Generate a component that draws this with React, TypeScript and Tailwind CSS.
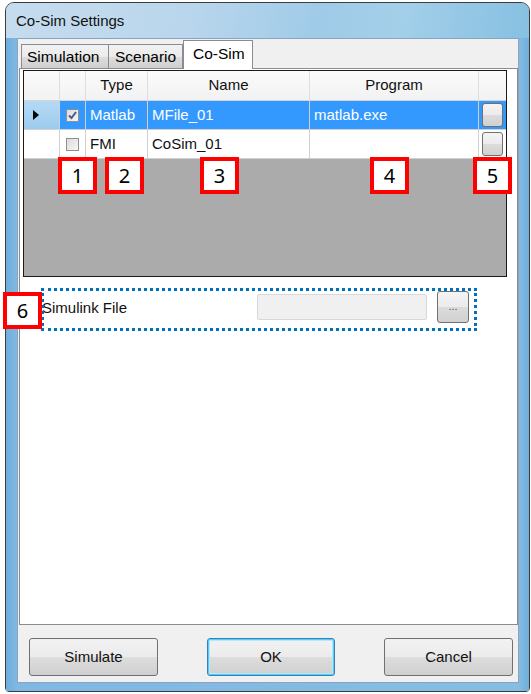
import React from "react";

const font = { fontFamily: '"Liberation Sans", Arial, sans-serif' };

function CheckBox({ checked }: { checked: boolean }) {
  return (
    <div className="w-[13px] h-[13px] border border-[#8e8f8f] bg-[linear-gradient(135deg,#dcdcdc,#f6f6f6)] flex items-center justify-center">
      {checked && (
        <svg width="11" height="11" viewBox="0 0 11 11">
          <path d="M2 5.5 L4.5 8 L9 2" fill="none" stroke="#4a5a8c" strokeWidth="2" />
        </svg>
      )}
    </div>
  );
}

function CellButton() {
  return (
    <div className="w-[21px] h-[24px] rounded-[3px] border border-[#707070] bg-[linear-gradient(#f4f4f4,#ebebeb_50%,#dcdcdc_51%,#d0d0d0)]" />
  );
}

function Label({ n, x, y }: { n: string; x: number; y: number }) {
  return (
    <div
      className="absolute w-[39px] h-[37px] border-[4px] border-[#ff0000] bg-white flex items-center justify-center text-[20px] text-black"
      style={{ left: x, top: y, fontFamily: '"Noto Sans", sans-serif' }}
    >
      {n}
    </div>
  );
}

const cols = [36, 26, 62, 162, 169, 27];

export default function App() {
  return (
    <div className="relative w-[531px] h-[694px] bg-white pt-[2px] pl-[5px] text-[15px] text-black" style={font}>
      <div className="w-[525px] h-[690px] rounded-t-[9px] rounded-b-[4px] border border-[#3c3c3c] bg-[linear-gradient(#a9cfea,#86bde3_30%,#6faedc)] flex flex-col">
        <div className="h-[35px] rounded-t-[8px] bg-[linear-gradient(100deg,#c6dcee,#b9d6ec_35%,#9fcbe8_60%,#a3cfe9_75%,#86c0e2)] flex items-center pl-[10px] pt-[2px]">
          <span className="text-[15px] text-[#111]">Co-Sim Settings</span>
        </div>
        <div className="flex-1 pl-[11px] pr-[10px] pb-[8px] bg-[linear-gradient(90deg,#6faedc,#7fb8e2_2%,#86bde3_98%,#6faedc)]">
          <div className="h-full border border-[#8aa4bf] bg-[#f0f0f0] flex flex-col">
            <div className="ml-[1px] mt-[1px] w-[499px]">
              <div className="h-[28px] pl-[2px] flex items-end">
                <div className="h-[24px] w-[88px] border border-[#898c95] border-b-0 bg-[linear-gradient(#f2f2f2,#ebebeb_50%,#dddddd_51%,#cfcfcf)] flex items-center pl-[5px] text-[15.5px]">
                  Simulation
                </div>
                <div className="h-[24px] w-[74px] border border-l-0 border-[#898c95] border-b-0 bg-[linear-gradient(#f2f2f2,#ebebeb_50%,#dddddd_51%,#cfcfcf)] flex items-center pl-[6px] text-[15.5px]">
                  Scenario
                </div>
                <div className="relative z-10 -mb-[1px] h-[29px] w-[70px] border border-[#898c95] border-b-0 bg-white flex items-center pl-[9px] pb-[2px] text-[15.5px]">
                  Co-Sim
                </div>
              </div>
              <div className="h-[557px] border border-[#898c95] bg-white pt-[1px] px-[3px]">
                <div className="w-[484px] h-[207px] border border-[#1a1a1a] flex flex-col bg-[#ababab]">
                  <div className="h-[30px] flex bg-[linear-gradient(#fbfbfb,#f2f2f2)] border-b border-[#d5d5d5]">
                    {["", "", "Type", "Name", "Program", ""].map((t, i) => (
                      <div
                        key={i}
                        className="h-full flex items-center justify-center border-r border-[#dedede] last:border-r-0 text-[#111]"
                        style={{ width: cols[i] }}
                      >
                        {t}
                      </div>
                    ))}
                  </div>
                  <div className="h-[29px] flex border-b border-[#d0d0d0] bg-white">
                    <div className="h-full border-r border-[#d0d0d0] bg-[linear-gradient(#b5d9f5,#9ccbef)] flex items-center pl-[9px]" style={{ width: cols[0] }}>
                      <svg width="6" height="10" viewBox="0 0 6 10">
                        <path d="M0 0 L6 5 L0 10 Z" fill="#000" />
                      </svg>
                    </div>
                    <div className="h-full border-r border-[#d0d0d0] bg-[#3399ff] flex items-center justify-center" style={{ width: cols[1] }}>
                      <CheckBox checked />
                    </div>
                    <div className="h-full border-r border-[#d0d0d0] bg-[#3399ff] text-white flex items-center pl-[4px]" style={{ width: cols[2] }}>
                      Matlab
                    </div>
                    <div className="h-full border-r border-[#d0d0d0] bg-[#3399ff] text-white flex items-center pl-[4px]" style={{ width: cols[3] }}>
                      MFile_01
                    </div>
                    <div className="h-full border-r border-[#d0d0d0] bg-[#3399ff] text-white flex items-center pl-[4px]" style={{ width: cols[4] }}>
                      matlab.exe
                    </div>
                    <div className="h-full bg-[#3399ff] flex items-center justify-center" style={{ width: cols[5] }}>
                      <CellButton />
                    </div>
                  </div>
                  <div className="h-[29px] flex border-b border-[#d0d0d0] bg-white">
                    <div className="h-full border-r border-[#d0d0d0]" style={{ width: cols[0] }} />
                    <div className="h-full border-r border-[#d0d0d0] flex items-center justify-center" style={{ width: cols[1] }}>
                      <CheckBox checked={false} />
                    </div>
                    <div className="h-full border-r border-[#d0d0d0] flex items-center pl-[4px] text-[#111]" style={{ width: cols[2] }}>
                      FMI
                    </div>
                    <div className="h-full border-r border-[#d0d0d0] flex items-center pl-[4px] text-[#111]" style={{ width: cols[3] }}>
                      CoSim_01
                    </div>
                    <div className="h-full border-r border-[#d0d0d0]" style={{ width: cols[4] }} />
                    <div className="h-full flex items-center justify-center" style={{ width: cols[5] }}>
                      <CellButton />
                    </div>
                  </div>
                  <div className="flex-1 bg-[#ababab]" />
                </div>
                <div className="mt-[14px] ml-[19px] h-[32px] flex items-center">
                  <div className="w-[215px] text-[#111] pt-[2px]">Simulink File</div>
                  <div className="w-[170px] h-[26px] rounded-[2px] border border-[#d8d8d8] bg-[#f0f0f0]" />
                  <div className="ml-[10px] w-[32px] h-[32px] rounded-[3px] border border-[#707070] bg-[linear-gradient(#f4f4f4,#ebebeb_50%,#dcdcdc_51%,#d0d0d0)] flex items-center justify-center text-[11px] text-[#5a4a8a] pb-[2px]">
                    ...
                  </div>
                </div>
              </div>
            </div>
            <div className="mt-[13px] flex">
              <div className="ml-[11px] w-[129px] h-[38px] rounded-[3px] border border-[#707070] bg-[linear-gradient(#f2f2f2,#ebebeb_50%,#dddddd_51%,#cfcfcf)] flex items-center justify-center text-[#111]">
                Simulate
              </div>
              <div className="ml-[49px] w-[128px] h-[38px] rounded-[3px] border border-[#3c7fb1] bg-[linear-gradient(#f2f2f2,#ebebeb_50%,#dddddd_51%,#cfcfcf)] shadow-[inset_0_0_0_1px_#48d1ff,inset_0_0_0_2px_#b9e6fb] flex items-center justify-center text-[#111]">
                OK
              </div>
              <div className="ml-[49px] w-[129px] h-[38px] rounded-[3px] border border-[#707070] bg-[linear-gradient(#f2f2f2,#ebebeb_50%,#dddddd_51%,#cfcfcf)] flex items-center justify-center text-[#111]">
                Cancel
              </div>
            </div>
          </div>
        </div>
      </div>

      <Label n="1" x={58} y={157} />
      <Label n="2" x={105} y={157} />
      <Label n="3" x={200} y={157} />
      <Label n="4" x={370} y={157} />
      <Label n="5" x={473} y={157} />
      <div className="absolute left-[41px] top-[288px] w-[436px] h-[43px] border-[3px] border-dotted border-[#0070c0]" />
      <Label n="6" x={3} y={292} />
    </div>
  );
}
